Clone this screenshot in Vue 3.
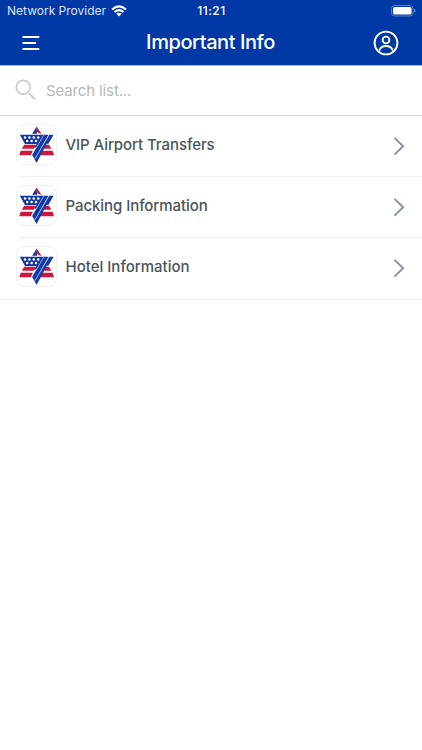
<script setup>
const items = [
  { title: 'VIP Airport Transfers', cls: 'vip' },
  { title: 'Packing Information', cls: 'packing' },
  { title: 'Hotel Information', cls: 'hotel' }
]
</script>

<template>
  <div class="screen">
    <header>
      <div class="status">
        <div class="carrier">
          <span>Network Provider</span>
          <svg width="16" height="12" viewBox="0 0 16 12" fill="none" stroke="#fff" stroke-width="2">
            <path d="M1 4.4Q8-1.7 15 4.4M3.5 7Q8 3.2 12.5 7" />
            <path d="M8 11.5 5.3 8.8Q8 6.8 10.7 8.8Z" fill="#fff" stroke="none" />
          </svg>
        </div>
        <span class="time">11:21</span>
        <svg class="battery" width="25" height="12" viewBox="0 0 25 12">
          <rect x=".5" y=".5" width="21.5" height="10.5" rx="3" fill="none" stroke="#5c7fca" />
          <rect x="2" y="2" width="18.5" height="7.5" rx="1.6" fill="#fff" />
          <path d="M23.4 4v3.6q1.2-.6 1.2-1.8T23.4 4" fill="#7f9bd8" />
        </svg>
      </div>
      <div class="nav">
        <svg class="menu" width="18" height="16" viewBox="0 0 18 16" stroke="#fff" stroke-width="2" stroke-linecap="round">
          <path d="M1.2 2h15.3M1.2 8h12M1.2 14h15.3" />
        </svg>
        <h1>Important Info</h1>
        <svg class="user" width="26" height="26" viewBox="0 0 26 26" fill="none" stroke="#fff" stroke-width="1.9">
          <circle cx="13" cy="13" r="11.4" />
          <circle cx="13" cy="10" r="3.4" />
          <path d="M6.5 19.8Q8.3 16 13 16t6.5 3.8" stroke-linecap="round" />
        </svg>
      </div>
    </header>
    <div class="search">
      <svg width="22" height="23" viewBox="0 0 22 23" fill="none" stroke="#c8cdd2">
        <circle cx="8.2" cy="8.2" r="6.9" stroke-width="1.8" />
        <path d="m14 14.2 6 6" stroke-width="2.3" />
      </svg>
      <span>Search list...</span>
    </div>
    <main>
      <div v-for="item in items" :key="item.title" class="row">
        <svg class="logo" width="41" height="41" viewBox="0 0 41 41">
          <rect x=".5" y=".5" width="40" height="40" rx="7.5" fill="#fff" stroke="#f0f0f1" />
          <path d="M20.7 2.4 16.2 9.8h4.8Z" fill="#173a98" />
          <path d="M20.7 2.4V8l3.8 1.8h1Z" fill="#cf193f" />
          <path d="M3.8 10.7h24l-5.3 9.3H9Z" fill="#1238a0" />
          <path d="M8.2 20.8H20l-2.2 3.9H5.8ZM4.7 26.8h12.1l-1.9 4.5H3.2ZM28.4 20.8H33l2.4 3.9h-9.2ZM25 26.8h11.5l1.6 4.5H22.4Z" fill="#ce173c" />
          <path d="M27 10.7h5.6L23 27.2l-4.6 7.6-2.3-3.8 4.4-7.6h-2.4ZM33.2 10.7h4.4l-5.2 9h-1.7L20.6 38.9l-2.2-3.8Z" fill="#103aa7" />
          <path d="M28 10.7 20.2 24M33 10.7 19.2 34.5" fill="none" stroke="#e4e9f5" stroke-width=".65" />
          <g fill="#fff">
            <circle cx="9" cy="13.5" r="1.25" /><circle cx="13.4" cy="13.5" r="1.25" /><circle cx="17.8" cy="13.5" r="1.25" /><circle cx="22.2" cy="13.5" r="1.25" />
            <circle cx="11.2" cy="17.1" r="1.25" /><circle cx="15.6" cy="17.1" r="1.25" /><circle cx="20" cy="17.1" r="1.25" />
          </g>
        </svg>
        <span :class="['title', item.cls]">{{ item.title }}</span>
        <svg class="chevron" width="12" height="20" viewBox="0 0 12 20" fill="none" stroke="#8b949c" stroke-width="2">
          <path d="m1.5 1.9 8.6 8.3-8.6 8.4" />
        </svg>
      </div>
    </main>
  </div>
</template>

<style>
body { margin: 0; background: #fff; }
</style>

<style scoped>
.screen { width: 422px; height: 750px; overflow: hidden; background: #fff; font-family: Inter, "Liberation Sans", sans-serif; }
header { height: 65px; background: #0038a5; color: #fff; border-bottom: 1px solid #a9bce1; box-sizing: content-box; }
.status { height: 21px; display: grid; grid-template-columns: 1fr auto 1fr; align-items: center; padding: 0 6px 0 7px; }
.carrier { display: flex; align-items: center; gap: 5px; font-size: 12px; letter-spacing: 0; color: #dce5f8; white-space: nowrap; }
.time { font-size: 12px; font-weight: 500; letter-spacing: .55px; }
.battery { justify-self: end; }
.nav { height: 43px; display: grid; grid-template-columns: 1fr auto 1fr; align-items: center; padding: 0 23px 0 22px; }
.nav h1 { margin: -2px 0 0; font-size: 20px; line-height: 40px; font-weight: 500; letter-spacing: -.43px; }
.user { justify-self: end; }
.search { height: 50px; box-sizing: border-box; border-bottom: 1px solid #dedede; display: flex; align-items: center; gap: 9px; padding-left: 15px; color: #b8b8ba; font-size: 15px; letter-spacing: -.13px; }
.row { height: 61.2px; box-sizing: border-box; display: flex; align-items: flex-start; padding: 8px 17px 0 16px; background: linear-gradient(#eee, #eee) 20px 100% / 100% 1px no-repeat; }
.row:last-child { background-position: 0 100%; }
.title { flex: 1; margin: 10px 0 0 8.5px; line-height: 22px; font-size: 15px; font-weight: 500; color: #48545a; letter-spacing: -.07px; }
.title.hotel { letter-spacing: 0; }
.chevron { margin-top: 12px; }
</style>
